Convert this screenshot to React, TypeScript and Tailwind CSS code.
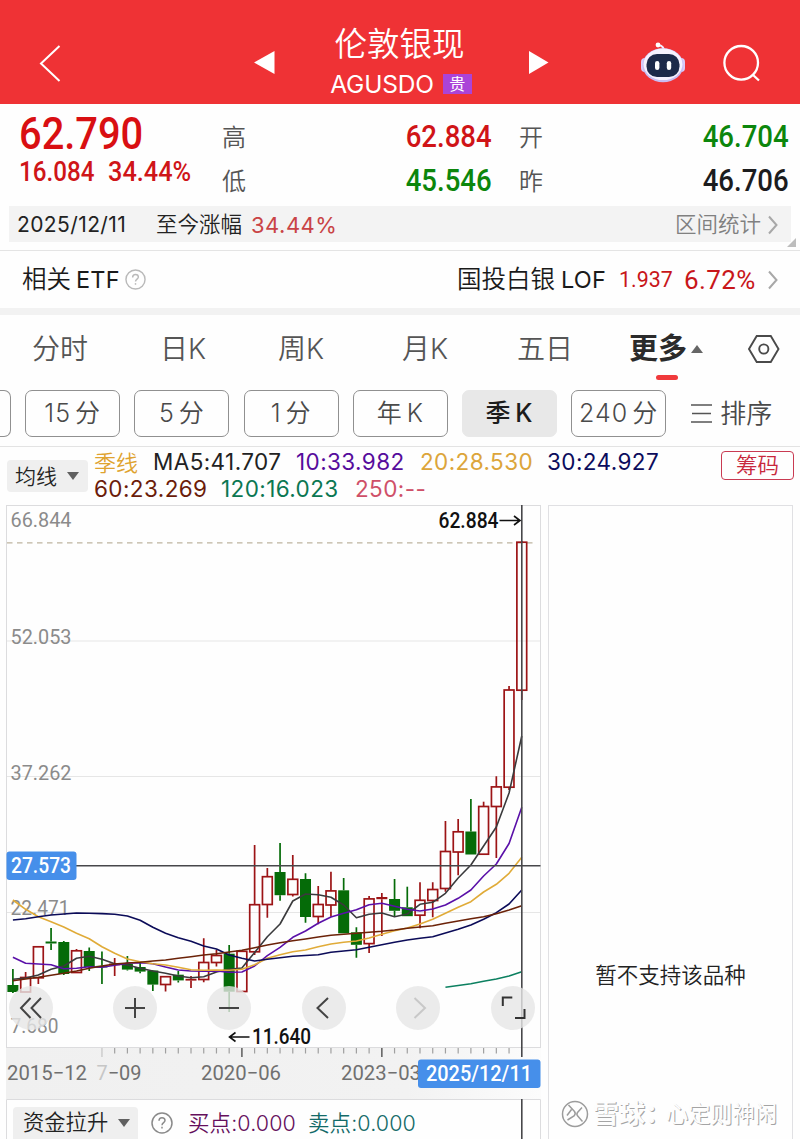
import React from 'react';

type Candle = [top: number, bottom: number, high: number, low: number, up: boolean];

const STEP = 12.722;
const FIRST_X = 12.9;
const xAt = (i: number) => FIRST_X + i * STEP;

// body top, body bottom, wick top, wick bottom, rising
const candles: Candle[] = [
    [985, 992, 969, 993, false],
    [977.5, 992, 972, 992, true],
    [946.8, 977.8, 946, 984, true],
    [941.5, 943.5, 928, 950, false],
    [942, 974, 941, 975, false],
    [950.8, 972.5, 949, 973, true],
    [951, 967, 947.5, 971, false],
    [965.8, 967.5, 951.5, 984, false],
    [963.5, 965.3, 958, 976, true],
    [964, 969.6, 956, 970.6, false],
    [967, 971.6, 962.5, 973.3, false],
    [970.5, 984.6, 970, 991, false],
    [976.7, 984.5, 976, 991.6, true],
    [974.7, 980.4, 971, 982.4, false],
    [978.8, 980.6, 976, 988, true],
    [962.5, 979.5, 938.3, 982.3, true],
    [955.5, 962.5, 950, 966.6, true],
    [953.7, 991.7, 945, 1012, false],
    [951.3, 991.5, 950, 992, true],
    [904.7, 951.8, 845, 955, true],
    [876.7, 904.5, 868, 917.7, true],
    [872, 895.2, 843, 900.7, false],
    [879.3, 894.5, 855, 896.6, true],
    [879, 917, 873.3, 922.7, false],
    [904.5, 916.5, 886, 924.3, true],
    [890.9, 905, 871.7, 916.7, true],
    [890.3, 933.3, 878, 933.3, false],
    [932.3, 944.8, 927.3, 957.7, false],
    [898.9, 943.6, 896, 953, true],
    [897, 899.2, 893, 936, true],
    [899, 910.8, 879, 916.7, false],
    [907.3, 916.2, 886.7, 916.2, false],
    [900.3, 915.2, 882.3, 928.3, true],
    [889.5, 900.5, 882.3, 917.3, true],
    [851.5, 888.5, 821, 891.7, true],
    [831.8, 852, 819, 875.3, true],
    [831.5, 854.5, 799, 854.5, false],
    [806.5, 854.2, 801.7, 854.2, true],
    [786.9, 806.5, 776.3, 858, true],
    [690, 787.2, 686, 790, true],
    [542.2, 690.2, 541, 700, true],
];

const averages = [
    {
        color: '#3a3a3c',
        from: 0,
        ys: [979.3, 978, 975, 969.3, 966, 958.3, 956.3, 959.3, 963.7, 965, 968.3, 971, 973.3, 976, 977.7, 976.7, 972, 969.3, 968, 952.5, 936.7, 924, 901, 894, 894.7, 897.3, 905, 917.7, 914.3, 913, 916.7, 914, 904.3, 902.3, 893.3, 878, 865, 846, 827, 793, 736],
    },
    {
        color: '#5a10a8',
        from: 0,
        ys: [957.3, 963.3, 964, 964.7, 968.7, 968.3, 966.7, 967.3, 965.3, 963.3, 962.7, 963.7, 967, 970, 971, 971.3, 971, 972.3, 972, 966, 955.7, 947.3, 937.3, 931, 923.3, 917, 913.3, 909.7, 904.7, 903.3, 906.3, 909.3, 911, 909, 905, 898.3, 890, 876, 864, 843.5, 807.3],
    },
    {
        color: '#e0ab38',
        from: 0,
        ys: [900, 909.3, 916.7, 921.7, 927, 933.3, 938.7, 946.7, 953.3, 959, 961.7, 963.7, 965, 967.3, 969.7, 970.3, 970, 970.3, 969.3, 964.7, 958.3, 954.7, 951.7, 950, 946.7, 944, 942.3, 941, 938, 934.3, 930.7, 928, 924, 919.3, 913.3, 907.3, 901.7, 892, 884.3, 873.3, 857.3],
    },
    {
        color: '#0b0b58',
        from: 0,
        ys: [920, 918.7, 916.7, 915, 914, 913, 913.3, 913.6, 914.3, 916, 920.3, 927.3, 933.3, 937.7, 941.3, 946, 949, 955, 958.3, 961, 959.3, 957.7, 956.3, 955.5, 954.7, 952.3, 951, 949.7, 947.2, 944.7, 942.3, 940, 938.3, 936.7, 933, 929.3, 925, 919.3, 912.7, 904, 890],
    },
    {
        color: '#6b2208',
        from: 0,
        ys: [980.7, 979, 977.3, 975.3, 973.3, 971, 968.3, 966, 964, 963, 962.3, 961, 960, 958.3, 956.7, 955, 953.7, 952, 950.3, 947.7, 945, 942.7, 940.8, 939, 937, 935.3, 934.2, 933.3, 932.3, 931.3, 930, 928.3, 927, 925.7, 923.3, 921, 918.8, 916.7, 913.7, 910, 905.7],
    },
    {
        color: '#0c8060',
        from: 34,
        ys: [987.3, 985.5, 983.7, 981.3, 979, 976, 971.7],
    },
];

const priceLabels = [
    { text: '66.844', y: 526.7, w: 61 },
    { text: '52.053', y: 644, w: 61 },
    { text: '37.262', y: 780, w: 61 },
    { text: '22.471', y: 915, w: 59 },
    { text: '7.680', y: 1033, w: 48 },
];

const periods = ['15 分', '5 分', '1 分', '年 K', '季 K', '240 分'];

const HelpIcon = ({ size, color }: { size: number; color: string }) => (
    <svg width={size} height={size} viewBox="0 0 22 22" fill="none" stroke={color} strokeWidth="1.5" className="shrink-0">
        <circle cx="11" cy="11" r="10" />
        <path d="M8 8.8c0-1.9 1.2-3.1 3-3.1s3 1.1 3 2.8c0 2.1-3 2.2-3 4.7" />
        <path d="M11 14.8v1.7" />
    </svg>
);

const Chevron = () => (
    <svg width="10" height="20" viewBox="0 0 10 20" fill="none" stroke="#a8a8a8" strokeWidth="2" className="shrink-0">
        <path d="M1 1.5l7.5 8.5L1 18.5" />
    </svg>
);

const Header = () => (
    <header className="flex h-[104px] shrink-0 items-start bg-[#ef3235] text-white">
        <svg width="22" height="38" viewBox="0 0 22 38" fill="none" stroke="#fff" strokeWidth="2" className="mt-[44px] ml-[39px]">
            <path d="M20.5 2L2 19.5l18.5 17.5" />
        </svg>
        <svg width="21" height="23" viewBox="0 0 21 23" fill="#fff" className="mt-[51px] ml-[193px]">
            <path d="M0 11.5L20.5 0v23z" />
        </svg>
        <div className="flex w-[253px] flex-col items-center pt-[28px]">
            <div className="mr-[4px] h-[34px] text-[32.5px] leading-[34px] font-[350]">伦敦银现</div>
            <div className="mt-[8px] mr-[1px] flex h-[28px] items-center">
                <span className="text-[24.5px] leading-none font-normal tracking-[-0.2px]">AGUSDO</span>
                <span className="ml-[9px] flex h-[20px] w-[29px] items-center justify-center bg-[#ab43d8] text-[16px] leading-none">贵</span>
            </div>
        </div>
        <svg width="21" height="23" viewBox="0 0 21 23" fill="#fff" className="mt-[51px]">
            <path d="M20.5 11.5L1 0v23z" />
        </svg>
        <svg width="46" height="42" viewBox="0 0 46 42" className="mt-[41px] ml-[91px]">
            <path d="M17 4.5c3-1 6 .5 7 4" fill="none" stroke="#f3ecff" strokeWidth="2" />
            <circle cx="18" cy="4" r="2.4" fill="#fff" />
            <rect x="1" y="17" width="8" height="14" rx="4" fill="#d9cbf8" />
            <rect x="37" y="17" width="8" height="14" rx="4" fill="#d9cbf8" />
            <ellipse cx="23" cy="24.3" rx="20.5" ry="17" fill="#c9bdf3" />
            <ellipse cx="23" cy="23.3" rx="19.5" ry="15.8" fill="#f6f2ff" />
            <rect x="6.5" y="13" width="33" height="23" rx="10.5" fill="#1d2a4a" />
            <rect x="15" y="20" width="4.4" height="9" rx="2.2" fill="#fff" />
            <rect x="26.8" y="20" width="4.4" height="9" rx="2.2" fill="#fff" />
        </svg>
        <svg width="38" height="38" viewBox="0 0 38 38" fill="none" stroke="#fff" strokeWidth="2.3" className="mt-[44px] ml-[37px]">
            <circle cx="18.2" cy="18.8" r="16.8" />
            <path d="M29.5 30.5l6.5 6" />
        </svg>
    </header>
);

const QuotePanel = () => (
    <section className="relative h-[147px] shrink-0 border-b border-[#e4e4e4]">
        <div className="flex h-[102px] [font-family:Roboto,sans-serif] font-medium">
            <div className="w-[222px] pt-[7px] pl-[19px] text-[#d90f12]">
                <div className="h-[46px] origin-left scale-x-[0.885] text-[45px] leading-[46px]">62.790</div>
                <div className="flex h-[28px] pt-[1px] text-[27.5px] leading-[28px] text-[#cf1518]">
                    <span className="w-[89px] origin-left scale-x-[0.88]">16.084</span>
                    <span className="origin-left scale-x-[0.92]">34.44%</span>
                </div>
            </div>
            <div className="flex w-[270px] flex-col pt-[10px]">
                <div className="flex h-[44px] items-center justify-between">
                    <span className="[font-family:'Noto_Sans_CJK_SC',sans-serif] text-[24px] leading-none font-[350] text-[#555]">高</span>
                    <span className="origin-right scale-x-[0.89] text-[31px] leading-none text-[#d01417]">62.884</span>
                </div>
                <div className="flex h-[44px] items-center justify-between">
                    <span className="[font-family:'Noto_Sans_CJK_SC',sans-serif] text-[24px] leading-none font-[350] text-[#555]">低</span>
                    <span className="origin-right scale-x-[0.89] text-[31px] leading-none text-[#0c860c]">45.546</span>
                </div>
            </div>
            <div className="ml-[27px] flex w-[270px] flex-col pt-[10px]">
                <div className="flex h-[44px] items-center justify-between">
                    <span className="[font-family:'Noto_Sans_CJK_SC',sans-serif] text-[24px] leading-none font-[350] text-[#555]">开</span>
                    <span className="origin-right scale-x-[0.89] text-[31px] leading-none text-[#0c860c]">46.704</span>
                </div>
                <div className="flex h-[44px] items-center justify-between">
                    <span className="[font-family:'Noto_Sans_CJK_SC',sans-serif] text-[24px] leading-none font-[350] text-[#555]">昨</span>
                    <span className="origin-right scale-x-[0.89] text-[31px] leading-none text-[#1c1c1e]">46.706</span>
                </div>
            </div>
        </div>
        <div className="mx-[9px] flex h-[36px] items-center bg-[#f3f3f3] pt-[1px] pr-[13px] pl-[8px] text-[21.5px] leading-none text-[#222]">
            <span className="w-[139px] text-[21px] tracking-[0.4px]">2025/12/11</span>
            <span className="w-[95px] font-[350]">至今涨幅</span>
            <span className="text-[22px] tracking-[0.5px] text-[#c94345]">34.44%</span>
            <span className="mr-[7px] ml-auto font-[350] text-[#808080]">区间统计</span>
            <Chevron />
        </div>
        <svg width="9" height="9" viewBox="0 0 9 9" fill="#bdbdbd" className="absolute right-[4px] bottom-[3px]">
            <path d="M9 0v9H0z" />
        </svg>
    </section>
);

const EtfRow = () => (
    <section className="flex h-[64px] shrink-0 items-center border-b-[7px] border-[#f2f2f2] pr-[22px] pl-[22px] text-[24.5px] leading-none font-[350] text-[#1a1a1a]">
        <span>相关</span>
        <span className="ml-[5px] text-[23.5px] font-normal tracking-[0.2px]">ETF</span>
        <span className="ml-[5px]"><HelpIcon size={21} color="#b9b9b9" /></span>
        <span className="ml-auto">国投白银</span>
        <span className="ml-[6px] text-[23.5px] font-normal tracking-[0.2px]">LOF</span>
        <span className="ml-[13px] w-[65px] [font-family:Roboto,sans-serif] text-[22.5px] font-normal text-[#c8161a]">
            <span className="inline-block origin-left scale-x-[0.95]">1.937</span>
        </span>
        <span className="w-[84px] [font-family:Roboto,sans-serif] text-[26px] font-normal tracking-[0.4px] text-[#c8161a]">6.72%</span>
        <Chevron />
    </section>
);

const Tabs = () => (
    <section className="h-[132px] shrink-0 border-b border-[#e3e3e3]">
        <nav className="flex h-[67px] items-center pl-[32px] text-[28px] leading-none font-[350] text-[#555]">
            <span className="w-[128px]">分时</span>
            <span className="w-[118px]">日K</span>
            <span className="w-[124px]">周K</span>
            <span className="w-[115px]">月K</span>
            <span className="w-[112px]">五日</span>
            <span className="relative flex w-[119px] items-center font-bold text-[#2b2b2b]">
                <span className="text-[29px]">更多</span>
                <svg width="12" height="8" viewBox="0 0 12 8" fill="#666" className="ml-[4px]">
                    <path d="M6 0l6 8H0z" />
                </svg>
                <span className="absolute top-[41px] left-[27px] h-[5px] w-[22px] rounded-full bg-[#f03a3c]" />
            </span>
            <svg width="32" height="28" viewBox="0 0 32 28" fill="none" stroke="#4a4a4a" strokeWidth="1.9">
                <path d="M8.7 1h14.1l7.7 13-7.7 13H8.7L1 14z" />
                <circle cx="15.8" cy="14" r="4.6" />
            </svg>
        </nav>
        <div className="flex items-center gap-[14.2px] pt-[8px] text-[25px] leading-none font-[350] text-[#4a4a4a]">
            <span className="h-[47px] w-[11px] shrink-0 rounded-r-[7px] border border-l-0 border-[#909090]" />
            {periods.map((p) => (
                <span
                    key={p}
                    className={`flex h-[47px] w-[95px] shrink-0 items-center justify-center rounded-[7px] border tracking-[1px] [word-spacing:-4px] whitespace-pre ${p === '季 K' ? 'border-[#e8e8e8] bg-[#e8e8e8] font-medium text-[#1c1c1c]' : 'border-[#909090]'}`}
                >
                    {p}
                </span>
            ))}
            <span className="ml-[11px] flex items-center">
                <svg width="21" height="19" viewBox="0 0 21 19" stroke="#555" strokeWidth="1.5" className="mr-[8px]">
                    <path d="M0 1h21M1 9.5h19M0 18h21" />
                </svg>
                <span className="text-[26px]">排序</span>
            </span>
        </div>
    </section>
);

const Legend = () => (
    <section className="flex h-[58px] shrink-0 pl-[7px] text-[22.5px] leading-none font-[350]">
        <div className="mt-[13px] flex h-[32px] w-[81px] items-center rounded-[4px] bg-[#efefef] pl-[8px] text-[21px] text-[#222]">
            均线
            <svg width="12" height="8" viewBox="0 0 12 8" fill="#606060" className="ml-[10px]">
                <path d="M0 0h12L6 8z" />
            </svg>
        </div>
        <div className="ml-[6px] w-[600px] font-normal tracking-[0.4px] whitespace-nowrap">
            <div className="mt-[2px] flex h-[27px] items-center">
                <span className="w-[59px] text-[22px] font-[350] tracking-normal text-[#dfa32f]">季线</span>
                <span className="w-[143px] text-[#222]">MA5:41.707</span>
                <span className="w-[124px] text-[#560c9c]">10:33.982</span>
                <span className="w-[127px] text-[#dca53a]">20:28.530</span>
                <span className="text-[#0c0c5c]">30:24.927</span>
            </div>
            <div className="flex h-[27px] items-center">
                <span className="w-[127px] text-[#6b1c0a]">60:23.269</span>
                <span className="w-[134px] text-[#0b7752]">120:16.023</span>
                <span className="text-[#cf5068]">250:--</span>
            </div>
        </div>
        <div className="mt-[4px] ml-[27px] flex h-[29px] w-[73px] items-center justify-center rounded-[4px] border border-[#c93a52] text-[21.5px] text-[#c8283c]">
            筹码
        </div>
    </section>
);

const KLineChart = () => (
    <svg width="548" height="634" viewBox="0 505 548 634" className="block">
        <defs>
            <linearGradient id="axisFade" x1="0" x2="1" y1="0" y2="0">
                <stop offset="0" stopColor="#f0f0f0" />
                <stop offset="0.75" stopColor="#f2f2f2" />
                <stop offset="1" stopColor="#fcfcfc" />
            </linearGradient>
        </defs>
        <rect x="6" y="1048" width="535" height="51" fill="url(#axisFade)" />
        <g stroke="#dcdcde" strokeWidth="1" fill="none">
            <rect x="6.5" y="505.5" width="534" height="542" />
            <path d="M6.5 1139v-39.5h534v39.5" />
            <path d="M7 641h533M7 776.5h533M7 912.5h533" stroke="#e6e6e6" />
        </g>
        <path d="M7 542.8h529" stroke="#bdb49f" strokeWidth="1.2" strokeDasharray="5.5 4.5" />

        <g fontFamily="Roboto, sans-serif" fontSize="21" fill="#8b8b8b">
            {priceLabels.map((l) => (
                <text key={l.text} x="10.5" y={l.y} textLength={l.w} lengthAdjust="spacingAndGlyphs">{l.text}</text>
            ))}
        </g>

        {candles.map(([top, bottom, high, low, up], i) => {
            const x = xAt(i);
            const color = up ? '#9c1416' : '#056b08';
            return (
                <g key={i} stroke={color} strokeWidth="1.7">
                    <path d={`M${x} ${high}V${top}M${x} ${bottom}V${low}`} />
                    {up && bottom - top > 3 ? (
                        <rect x={x - 4.9} y={top} width="9.8" height={bottom - top} fill="none" />
                    ) : (
                        <rect x={x - 5.5} y={top} width="11" height={bottom - top} fill={color} stroke="none" />
                    )}
                </g>
            );
        })}

        {averages.map((line) => (
            <polyline
                key={line.color}
                fill="none"
                stroke={line.color}
                strokeWidth="1.6"
                strokeLinejoin="round"
                points={line.ys.map((y, i) => `${xAt(i + line.from)},${y}`).join(' ')}
            />
        ))}

        <path d="M76 865.7h464.5" stroke="#47474a" strokeWidth="1.5" />
        <path d="M521.8 505v552M521.8 1099v40" stroke="#47474a" strokeWidth="1.6" />

        <g fontFamily="Roboto, sans-serif" fontSize="21.5" fontWeight="500" fill="#111">
            <text x="438.5" y="528" textLength="60" lengthAdjust="spacingAndGlyphs">62.884</text>
            <text x="252" y="1044" textLength="59" lengthAdjust="spacingAndGlyphs">11.640</text>
        </g>
        <g stroke="#111" strokeWidth="1.6" fill="none">
            <path d="M499.5 520.5h20.5M514 516l6 4.5-6 4.5" />
            <path d="M249.5 1037h-20M235.5 1032.5l-6 4.5 6 4.5" />
        </g>

        {Array.from({ length: 33 }, (_, k) => k + 7).map((i) => {
            const major = i === 18 || i === 29;
            return (
                <path
                    key={i}
                    d={`M${xAt(i)} 1048v${major || i === 7 ? 9 : 5.5}`}
                    stroke={major ? '#666' : i === 7 ? '#c4c4c4' : '#a0a0a0'}
                    strokeWidth={major ? 1.6 : 1.2}
                />
            );
        })}
        <g fontFamily="Roboto, sans-serif" fontSize="21" fill="#707070">
            <text x="7" y="1080" textLength="80" lengthAdjust="spacingAndGlyphs">2015−12</text>
            <text x="96.5" y="1080" textLength="45" lengthAdjust="spacingAndGlyphs"><tspan fill="#c6c6c6">7</tspan>−09</text>
            <text x="201" y="1080" textLength="80" lengthAdjust="spacingAndGlyphs">2020−06</text>
            <text x="341" y="1080" textLength="80" lengthAdjust="spacingAndGlyphs">2023−03</text>
        </g>
        <rect x="418" y="1059.5" width="122.5" height="28.5" rx="3" fill="#468fea" />
        <rect x="6.5" y="851.5" width="70" height="28.5" rx="3" fill="#468fea" />
        <g fontFamily="Roboto, sans-serif" fontSize="22" fontWeight="500" fill="#fff">
            <text x="426" y="1081" textLength="106" lengthAdjust="spacingAndGlyphs">2025/12/11</text>
            <text x="11" y="873" textLength="60" lengthAdjust="spacingAndGlyphs">27.573</text>
        </g>
    </svg>
);

const controls = [
    { name: 'rewind', d: 'M21.5 12L12 22l9.5 10M32 12L22.5 22 32 32', color: '#444' },
    { name: 'zoom-in', d: 'M12 22h20M22 12v20', color: '#444' },
    { name: 'zoom-out', d: 'M12 22h20', color: '#444' },
    { name: 'prev', d: 'M26 12l-10.5 10L26 32', color: '#444' },
    { name: 'next', d: 'M18.5 12L29 22 18.5 32', color: '#c8c8c8' },
    { name: 'expand', d: 'M11.8 20v-8.5h9.5M24 32h9.5v-9', color: '#333' },
];

const ChartControls = () => (
    <div className="absolute top-[481px] left-[9px] flex gap-[50.6px]">
        {controls.map((c) => (
            <button key={c.name} className={`size-[44px] rounded-full bg-[#e6e6e6]/80 ${c.name === 'rewind' ? 'mr-[9px]' : ''}`}>
                <svg width="44" height="44" viewBox="0 0 44 44" fill="none" stroke={c.color} strokeWidth="2">
                    <path d={c.d} />
                </svg>
            </button>
        ))}
    </div>
);

const IndicatorRow = () => (
    <div className="absolute bottom-0 left-[7px] flex h-[32px] items-center pl-[6px] text-[21.5px] leading-none font-[350] whitespace-nowrap">
        <div className="flex h-[32px] w-[125px] items-center rounded-t-[4px] bg-[#efefef] pl-[10px] text-[21.3px] text-[#222]">
            资金拉升
            <svg width="12" height="8" viewBox="0 0 12 8" fill="#606060" className="ml-[10px]">
                <path d="M0 0h12L6 8z" />
            </svg>
        </div>
        <span className="ml-[13px]"><HelpIcon size={22} color="#8a8a8a" /></span>
        <span className="mt-[1px] ml-[15px] w-[120px] tracking-[0.1px] text-[#650f5c]">买点:0.000</span>
        <span className="mt-[1px] tracking-[0.1px] text-[#136a68]">卖点:0.000</span>
    </div>
);

const SidePanel = () => (
    <aside className="flex w-[245px] flex-col items-center border border-b-0 border-[#e0e0e3]">
        <p className="mt-[459px] text-[21.5px] leading-none font-[350] text-[#222]">暂不支持该品种</p>
        <div className="mt-auto mb-[11px] flex items-center self-stretch pl-[12px] leading-none whitespace-nowrap text-[#fdfdfd] [text-shadow:1px_1px_0_#a4a4a4]">
            <svg width="28" height="28" viewBox="0 0 28 28" fill="none" stroke="#9c9c9c" strokeWidth="1.5" className="mr-[4px]">
                <circle cx="14" cy="14" r="12.5" />
                <path d="M7.5 5l6 6.500c1.200 1.500.8 3-.5 4.500L6.500 20M21 7.500l-4.500 5c-1 1.300-.8 2.400.2 3.500l4.800 5.500M10.500 9.500l-4.500 6" />
            </svg>
            <span className="w-[73px] text-[26px] font-bold">雪球：</span>
            <span className="text-[22.2px]">心定则神闲</span>
        </div>
    </aside>
);

export default function App() {
    return (
        <div className="flex h-[1139px] w-[800px] flex-col overflow-hidden bg-[#fefefe] [font-family:Inter,'Noto_Sans_CJK_SC',sans-serif]">
            <Header />
            <QuotePanel />
            <EtfRow />
            <Tabs />
            <Legend />
            <main className="flex h-[634px] shrink-0">
                <div className="relative w-[548px]">
                    <KLineChart />
                    <ChartControls />
                    <IndicatorRow />
                </div>
                <SidePanel />
            </main>
        </div>
    );
}
